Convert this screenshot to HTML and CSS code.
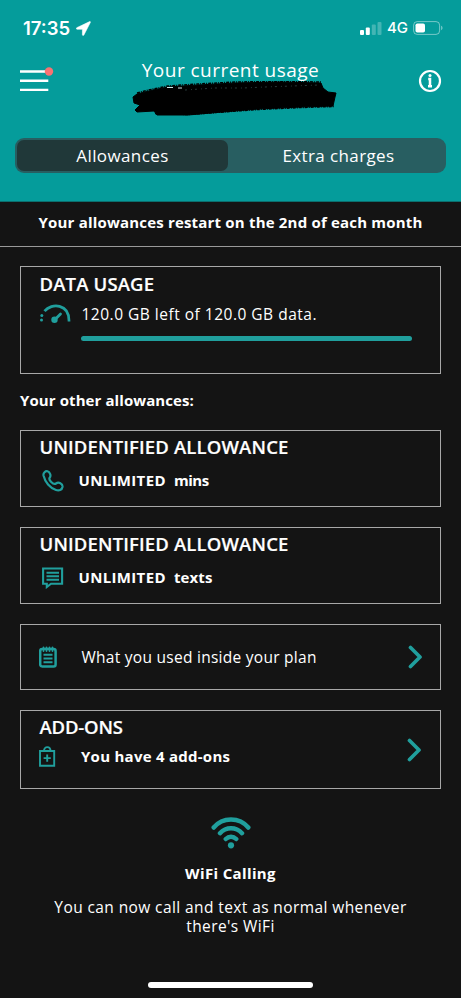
FILE: index.html
```html
<!DOCTYPE html>
<html lang="en">
<head>
<meta charset="utf-8">
<meta name="viewport" content="width=device-width, initial-scale=1">
<title>Your current usage</title>
<link rel="stylesheet" href="styles.css">
</head>
<body>
<div class="screen">
  <header class="header">
    <div class="status">
      <span class="clock">17:35</span>
      <svg class="location" width="15" height="15" viewBox="0 0 15 15"><path d="M13.700.6.8 6.700c-.8.4-.6 1.500.2 1.500h5.400v5.500c0 .9 1.100 1 1.500.2L14.400 1.300c.2-.5-.2-.9-.7-.7z" fill="#fff" stroke="#fff" stroke-width=".6"/></svg>
      <svg class="signal" width="22" height="13" viewBox="0 0 22 13" fill="#fff"><rect x="0" y="8" width="4" height="5" rx="1"/><rect x="5.800" y="5.500" width="4" height="7.500" rx="1"/><rect x="11.800" y="2.500" width="4" height="10.500" rx="1" opacity=".25"/><rect x="17.500" y="0" width="4" height="13" rx="1" opacity=".25"/></svg>
      <span class="network">4G</span>
      <svg class="battery" width="31" height="14" viewBox="0 0 31 14"><rect x=".6" y=".6" width="26" height="12.800" rx="3.600" fill="none" stroke="#fff" stroke-opacity=".45"/><rect x="2.500" y="2.500" width="9.500" height="9" rx="1.800" fill="#fff"/><path d="M28.200 4.800c1.700.5 1.700 3.900 0 4.400z" fill="#fff" opacity=".5"/></svg>
    </div>
    <div class="topbar">
      <svg class="menu" width="34" height="26" viewBox="0 0 34 26"><path d="M0 5.500h28.300M0 14.700h28.300M0 23.900h28.300" stroke="#fff" stroke-width="2.400"/><circle cx="29" cy="5.500" r="4.200" fill="#f87272"/></svg>
      <h1 class="title">Your current usage</h1>
      <svg class="info" width="24" height="24" viewBox="0 0 24 24"><circle cx="12" cy="12" r="10" fill="none" stroke="#fff" stroke-width="2.200"/><circle cx="12" cy="6.600" r="1.500" fill="#fff"/><path d="M10.200 9.900H12v7.200M10 17.300h4" fill="none" stroke="#fff" stroke-width="2.500"/></svg>
      <svg class="scribble" width="208" height="36" viewBox="0 0 208 36"><path d="M2 16 6 13l16-4 15-3 30-2 37-2 45-1 41 1 2 5 5 4 8 1-1 4-2 9-32 1-43 2-35 3-35 3H26l-3-4-17 1-2-2 5-5-6-2z" fill="#000" stroke="#000" stroke-linejoin="round"/><path d="M24 32.500l33 1 35-2.500 35-2.500 43-2 33-1M6 12l16-4 15-3 30-2 37-2 45-.5 41 .5" fill="none" stroke="#000" stroke-width="1.500" stroke-dasharray="3 1 1 1"/><path d="M36 6.500h6M47 7h4" stroke="#cfe5e5" stroke-width="1.200"/><path d="M54 9l30-2 28 0 22-1 54-2" fill="none" stroke="#2c4040" stroke-width=".9" stroke-dasharray="2 4 1 3"/></svg>
    </div>
    <nav class="tabs">
      <a class="tab tab-active">Allowances</a>
      <a class="tab">Extra charges</a>
    </nav>
  </header>
  <div class="notice">Your allowances restart on the 2nd of each month</div>
  <main class="content">
    <section class="card data-card">
      <h2 class="heading">DATA USAGE</h2>
      <div class="row data-row">
        <svg class="icon" width="32" height="20" viewBox="0 0 32 20"><path d="M4.500 7.200C11.500-1.500 29.500-.5 29 17.500" fill="none" stroke="#209f9d" stroke-width="2.700"/><circle cx="1.800" cy="11.500" r="1.500" fill="#209f9d"/><circle cx="1.500" cy="16" r="1.500" fill="#209f9d"/><circle cx="14.500" cy="15.800" r="3.200" fill="#209f9d"/><path d="m15 15.500 5.500-5.500" stroke="#209f9d" stroke-width="2.800" stroke-linecap="round"/></svg>
        <span class="light quota">120.0 GB left of 120.0 GB data.</span>
      </div>
      <div class="meter"></div>
    </section>
    <h3 class="subhead">Your other allowances:</h3>
    <section class="card allowance">
      <h2 class="heading">UNIDENTIFIED ALLOWANCE</h2>
      <div class="row allowance-row">
        <svg class="icon" width="22" height="22" viewBox="0 0 22 22"><path d="M1.500 5.500C1 3 3.500.7 5.500 1.300c2.700.8 3.700 4.500 2.300 6.200-1.800 2 3.500 8 6.200 6 2.500-1.800 7-.2 6.500 3.500-.5 3-3.500 4-6.500 3C8 18 3 12 1.500 5.500z" fill="none" stroke="#209f9d" stroke-width="2.200"/></svg>
        <span class="bold amount">UNLIMITED</span><span class="bold mins">mins</span>
      </div>
    </section>
    <section class="card allowance">
      <h2 class="heading">UNIDENTIFIED ALLOWANCE</h2>
      <div class="row allowance-row">
        <svg class="icon" width="22" height="22" viewBox="0 0 22 22"><path d="M1.100 1.500h19v15.200H9L4.800 20v-3.300H1.100z" fill="none" stroke="#209f9d" stroke-width="2.100"/><path d="M4.500 5.700h12.500M4.500 9.200h12.500M4.500 12.700h12.500" stroke="#209f9d" stroke-width="1.900"/></svg>
        <span class="bold amount">UNLIMITED</span><span class="bold">texts</span>
      </div>
    </section>
    <section class="card plan">
      <svg class="icon" width="18" height="22" viewBox="0 0 18 22"><rect x="1.200" y="3" width="15.400" height="17.600" rx="2" fill="none" stroke="#209f9d" stroke-width="2.500"/><path d="M4.500 1.500v3.500M7.500 1.500v3.500M10.500 1.500v3.500M13.500 1.500v3.500" stroke="#209f9d" stroke-width="1.800" stroke-linecap="round"/><path d="M4.500 8.700h9M4.500 12.500h9M4.500 16.300h9" stroke="#209f9d" stroke-width="2"/></svg>
      <span class="light">What you used inside your plan</span>
      <svg class="chevron" width="15" height="24" viewBox="0 0 15 24"><path d="m2.500 2.500 9.500 9.500-9.500 9.500" fill="none" stroke="#209f9d" stroke-width="3.700" stroke-linecap="round" stroke-linejoin="round"/></svg>
    </section>
    <section class="card addons">
      <div class="addons-text">
        <h2 class="heading addons-heading">ADD-ONS</h2>
        <div class="row addons-row">
          <svg class="icon" width="18" height="22" viewBox="0 0 18 22"><path d="M1 5h14.200v14.800H1zM5 5c0-5.200 6.500-5.200 6.500 0M8.200 8.500v7.200M4.600 12.100h7.200" fill="none" stroke="#209f9d" stroke-width="1.900"/></svg>
          <span class="bold addons-copy">You have 4 add-ons</span>
        </div>
      </div>
      <svg class="chevron" width="15" height="24" viewBox="0 0 15 24"><path d="m2.500 2.500 9.500 9.500-9.500 9.500" fill="none" stroke="#209f9d" stroke-width="3.700" stroke-linecap="round" stroke-linejoin="round"/></svg>
    </section>
    <section class="wifi">
      <svg class="wifi-icon" width="40" height="32" viewBox="0 0 40 32"><path d="M2.700 10.500C11.500-.3 28.500-.3 37.300 10.500M9 16.200c6-6.500 16-6.500 22 0M14.800 22c3-3 7.400-3 10.400 0" fill="none" stroke="#209f9d" stroke-width="4.500" stroke-linecap="round"/><circle cx="20" cy="28.300" r="3.100" fill="#209f9d"/></svg>
      <h3 class="wifi-title">WiFi Calling</h3>
      <p class="wifi-copy">You can now call and text as normal whenever<br>there's WiFi</p>
    </section>
  </main>
  <div class="home-bar"></div>
</div>
</body>
</html>
```
FILE: styles.css
```css
* { box-sizing: border-box; margin: 0; padding: 0; }
body { background: #141414; color: #fff; font-family: "Open Sans", sans-serif; }
svg { display: block; flex: none; }
.screen { width: 461px; height: 998px; display: flex; flex-direction: column; overflow: hidden; }
.header { height: 202px; background: #059c9b; border-bottom: 1px solid #0b6f6e; }
.status { display: flex; align-items: center; height: 56px; padding: 0 17px 0 23px; }
.clock { font: 600 18.5px/24px Inter, sans-serif; width: 52px; }
.location { margin-left: 1px; }
.signal { margin-left: auto; }
.network { font: 500 15px/20px Inter, sans-serif; width: 26px; margin-left: 5px; }
.topbar { position: relative; display: flex; justify-content: space-between; height: 82px; padding: 0 19px 0 20px; }
.menu { margin-top: 10px; }
.info { margin-top: 13px; }
.title { font-weight: 400; font-size: 19px; line-height: 24px; letter-spacing: .47px; margin: 2px 11px 0 0; white-space: nowrap; }
.scribble { position: absolute; left: 131px; top: 25px; }
.tabs { display: flex; height: 35px; margin: 0 15px; padding: 2px; background: #285e61; border-radius: 9px; }
.tab { flex: 1; padding-left: 5px; text-align: center; font-size: 17px; line-height: 31px; letter-spacing: .39px; border-radius: 7px; }
.tab-active { flex: none; width: 211px; padding: 0; background: #203839; }
.notice { height: 45px; border-bottom: 1px solid #999; text-align: center; font-weight: 700; font-size: 15px; line-height: 40px; letter-spacing: .19px; white-space: nowrap; }
.content { padding: 19px 20px 0; }
.card { border: 1px solid #a8a8a8; padding-left: 18.500px; }
.heading { font-weight: 600; font-size: 18.5px; line-height: 24px; letter-spacing: .15px; -webkit-text-stroke: .2px #fff; white-space: nowrap; }
.row { display: flex; align-items: center; white-space: nowrap; }
.light { font-size: 15.5px; line-height: 22px; letter-spacing: .27px; }
.quota { letter-spacing: .5px; }
.bold { font-weight: 700; font-size: 15px; line-height: 22px; letter-spacing: .1px; }
.data-card { height: 108px; padding-top: 5px; }
.data-row { gap: 10px; height: 36px; }
.meter { width: 331px; height: 5px; margin: 4px 0 0 41.500px; border-radius: 3px; background: #209f9d; }
.subhead { height: 56px; font-size: 15px; line-height: 53px; letter-spacing: .09px; }
.allowance { height: 77px; margin-bottom: 20px; padding-top: 4px; }
.allowance-row { height: 43px; padding-left: 2px; }
.allowance-row .bold { margin-top: -2px; }
.amount { width: 95.500px; margin-left: 15px; letter-spacing: .34px; }
.mins { letter-spacing: -.5px; }
.plan { height: 66px; margin-bottom: 20px; display: flex; align-items: center; white-space: nowrap; }
.plan .icon { margin-left: -1px; }
.plan .light { margin-left: 25px; }
.chevron { margin-left: auto; margin-right: 17px; }
.addons { height: 79px; display: flex; align-items: center; }
.addons .icon { margin-left: -1px; }
.addons .chevron { margin-right: 18px; }
.addons-text { align-self: flex-start; padding-top: 4px; }
.addons-heading { letter-spacing: -.17px; }
.addons-row { height: 36px; gap: 24.500px; }
.addons-copy { letter-spacing: .26px; margin-top: -2px; }
.wifi { text-align: center; padding-top: 28px; }
.wifi-icon { margin: 0 auto; }
.wifi-title { margin-top: 12px; font-size: 15px; line-height: 24px; letter-spacing: .36px; }
.wifi-copy { margin-top: 13px; font-size: 15.5px; line-height: 19px; letter-spacing: .4px; white-space: nowrap; }
.home-bar { width: 165px; height: 6px; border-radius: 3px; background: #fff; margin: auto auto 10px; }
```
